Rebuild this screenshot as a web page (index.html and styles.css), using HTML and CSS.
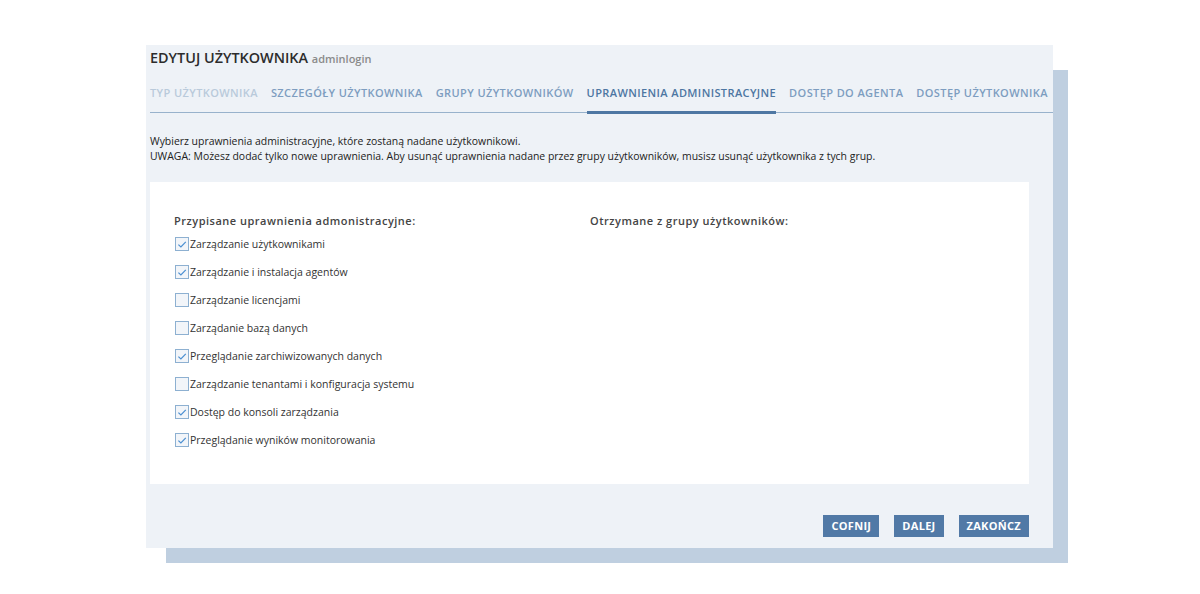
FILE: index.html
```html
<!DOCTYPE html>
<html lang="pl">
<head>
<meta charset="utf-8">
<title>Edytuj użytkownika</title>
<link rel="stylesheet" href="styles.css">
</head>
<body>
<div class="stage">
  <div class="panel">
    <h1 class="title">EDYTUJ UŻYTKOWNIKA <span class="login">adminlogin</span></h1>
    <nav class="tabs">
      <span class="tab tab-done">TYP UŻYTKOWNIKA</span>
      <span class="tab">SZCZEGÓŁY UŻYTKOWNIKA</span>
      <span class="tab">GRUPY UŻYTKOWNIKÓW</span>
      <span class="tab tab-active">UPRAWNIENIA ADMINISTRACYJNE</span>
      <span class="tab">DOSTĘP DO AGENTA</span>
      <span class="tab">DOSTĘP UŻYTKOWNIKA</span>
    </nav>
    <div class="intro">
      <p>Wybierz uprawnienia administracyjne, które zostaną nadane użytkownikowi.</p>
      <p>UWAGA: Możesz dodać tylko nowe uprawnienia. Aby usunąć uprawnienia nadane przez grupy użytkowników, musisz usunąć użytkownika z tych grup.</p>
    </div>
    <div class="card">
      <div class="col col-left">
        <h2 class="col-head">Przypisane uprawnienia admonistracyjne:</h2>
        <ul class="perms">
          <li class="perm"><span class="cb cb-on"><svg viewBox="0 0 13 13" width="13" height="13"><path d="M2.6 6.6 L5.3 9.2 L10.6 3.6" fill="none" stroke="#4b8fd1" stroke-width="1.3"/></svg></span>Zarządzanie użytkownikami</li>
          <li class="perm"><span class="cb cb-on"><svg viewBox="0 0 13 13" width="13" height="13"><path d="M2.6 6.6 L5.3 9.2 L10.6 3.6" fill="none" stroke="#4b8fd1" stroke-width="1.3"/></svg></span>Zarządzanie i instalacja agentów</li>
          <li class="perm"><span class="cb"></span>Zarządzanie licencjami</li>
          <li class="perm"><span class="cb"></span>Zarządanie bazą danych</li>
          <li class="perm"><span class="cb cb-on"><svg viewBox="0 0 13 13" width="13" height="13"><path d="M2.6 6.6 L5.3 9.2 L10.6 3.6" fill="none" stroke="#4b8fd1" stroke-width="1.3"/></svg></span>Przeglądanie zarchiwizowanych danych</li>
          <li class="perm"><span class="cb"></span>Zarządzanie tenantami i konfiguracja systemu</li>
          <li class="perm"><span class="cb cb-on"><svg viewBox="0 0 13 13" width="13" height="13"><path d="M2.6 6.6 L5.3 9.2 L10.6 3.6" fill="none" stroke="#4b8fd1" stroke-width="1.3"/></svg></span>Dostęp do konsoli zarządzania</li>
          <li class="perm"><span class="cb cb-on"><svg viewBox="0 0 13 13" width="13" height="13"><path d="M2.6 6.6 L5.3 9.2 L10.6 3.6" fill="none" stroke="#4b8fd1" stroke-width="1.3"/></svg></span>Przeglądanie wyników monitorowania</li>
        </ul>
      </div>
      <div class="col col-right">
        <h2 class="col-head">Otrzymane z grupy użytkowników:</h2>
      </div>
    </div>
    <div class="actions">
      <button class="btn">COFNIJ</button>
      <button class="btn">DALEJ</button>
      <button class="btn">ZAKOŃCZ</button>
    </div>
  </div>
</div>
</body>
</html>
```
FILE: styles.css
```css
* { box-sizing: border-box; }
html, body { margin: 0; padding: 0; background: #ffffff; }
body {
  font-family: "Open Sans", "Noto Sans", sans-serif;
  color: #333333;
  width: 1200px;
  height: 594px;
  overflow: hidden;
}
.stage {
  position: relative;
  z-index: 0;
  padding-top: 45px;
  padding-left: 146px;
}
.panel {
  position: relative;
  width: 907px;
  height: 503px;
  background: #eef2f7;
  padding: 0 0 0 4px;
  display: flex;
  flex-direction: column;
}
.panel::before {
  content: "";
  position: absolute;
  left: 20px;
  top: 25px;
  right: -15px;
  bottom: -15px;
  background: #bfcfe0;
  z-index: -1;
}
.title {
  margin: 0;
  padding-top: 3px;
  font-size: 14.4px;
  line-height: 20px;
  font-weight: 600;
  color: #2c2c2c;
}
.login {
  font-size: 11px;
  font-weight: 600;
  color: #8a8a8a;
}
.tabs {
  display: flex;
  gap: 13px;
  margin-top: 9px;
  border-bottom: 1px solid #98b2cc;
  height: 35px;
}
.tab {
  font-size: 11px;
  font-weight: 600;
  letter-spacing: 0.4px;
  color: #7d9dc0;
  line-height: 15px;
  padding-top: 7px;
  white-space: nowrap;
  position: relative;
}
.tab-done { color: #b9cadb; }
.tab-active { color: #4d76a2; }
.tab-active::after {
  content: "";
  position: absolute;
  left: 0;
  right: 0;
  bottom: -2px;
  height: 3px;
  background: #4e77a3;
}
.intro {
  margin-top: 21px;
  font-size: 10.45px;
  line-height: 15px;
  color: #222222;
}
.intro p { margin: 0; }
.card {
  margin-top: 18px;
  width: 879px;
  height: 302px;
  background: #ffffff;
  display: flex;
  padding: 31px 0 0 24px;
}
.col-left { width: 416px; }
.col-head {
  margin: 0;
  font-size: 11px;
  font-weight: 600;
  letter-spacing: 0.5px;
  color: #444444;
  line-height: 16px;
}
.perms {
  list-style: none;
  margin: 1px 0 0 0;
  padding: 0;
}
.perm {
  display: flex;
  align-items: center;
  height: 28px;
  font-size: 10.5px;
  color: #333333;
  white-space: nowrap;
}
.cb {
  width: 14px;
  height: 14px;
  border: 1px solid #8db0d1;
  background: #f2f5f9;
  margin-left: 1px;
  margin-right: 1px;
  display: flex;
  align-items: center;
  justify-content: center;
}
.cb svg { display: block; }
.actions {
  display: flex;
  justify-content: flex-end;
  gap: 15px;
  width: 879px;
  margin-top: 31px;
}
.btn {
  font-family: "Open Sans", "Noto Sans", sans-serif;
  font-size: 11px;
  font-weight: 700;
  letter-spacing: 0.3px;
  color: #ffffff;
  background: #5179a6;
  border: none;
  border-radius: 0;
  height: 22px;
  padding: 0 8px;
  line-height: 22px;
}
```
